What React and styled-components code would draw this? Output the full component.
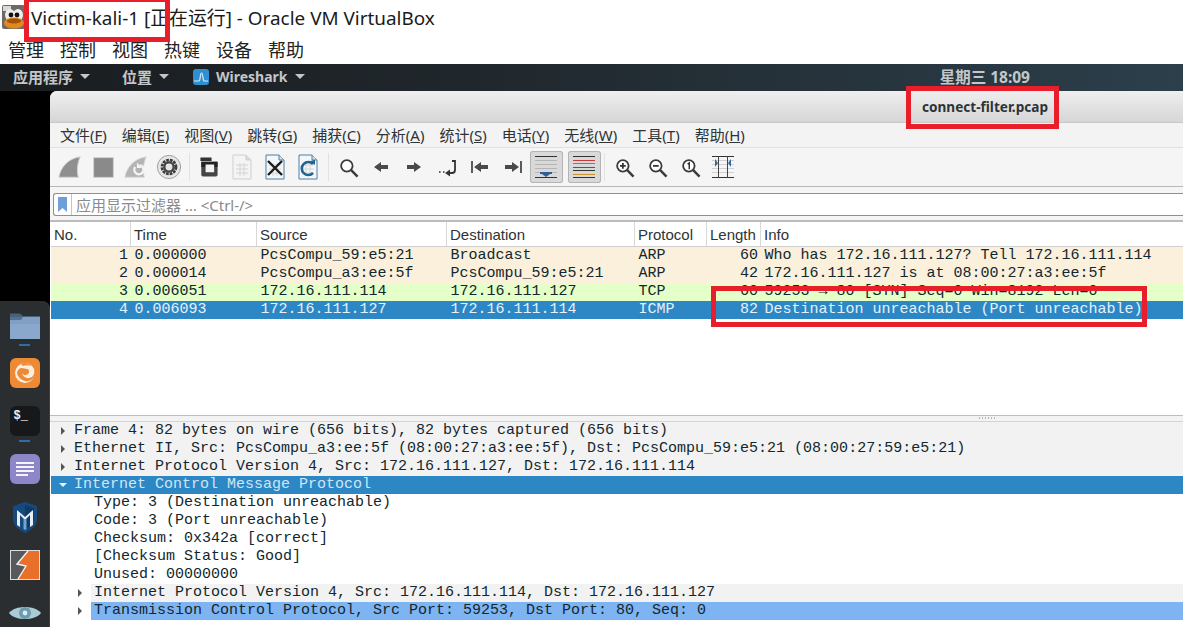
import React from "react";
import styled, { createGlobalStyle } from "styled-components";

const Global = createGlobalStyle`
  html, body { margin: 0; padding: 0; background: #fff; }
  * { box-sizing: border-box; }
`;

const Screen = styled.div`
  position: relative;
  width: 1183px;
  height: 627px;
  overflow: hidden;
  display: flex;
  flex-direction: column;
  font-family: "Noto Sans", "Noto Sans CJK SC", sans-serif;
`;
const TitleBar = styled.div`
  height: 38px;
  flex: none;
  display: flex;
  align-items: center;
  padding: 0 0 5px 2px;
  gap: 6px;
  font-size: 18.9px;
  color: #1a1a1a;
  background: #fff;
`;
const HostMenu = styled.div`
  height: 26px;
  flex: none;
  display: flex;
  align-items: center;
  gap: 16px;
  padding: 0 0 4px 8px;
  font-size: 18px;
  color: #222;
  background: #fff;
`;
const Panel = styled.div`
  height: 27px;
  flex: none;
  display: flex;
  align-items: center;
  padding: 0 153px 2px 13px;
  font-size: 15px;
  font-weight: 700;
  color: #c3c7ca;
  background: linear-gradient(90deg, #1a1d20 0%, #20272c 40%, #2c3f4b 100%);
`;
const PanelItem = styled.div`
  display: flex;
  align-items: center;
  gap: 7px;
  margin-right: ${(p) => p.$gap}px;
  font-size: ${(p) => p.$size || 15}px;
`;
const Caret = styled.span`
  width: 0;
  height: 0;
  border-left: 5px solid transparent;
  border-right: 5px solid transparent;
  border-top: 5px solid #c3c7ca;
`;
const Clock = styled.div`
  margin-left: auto;
  font-size: 15.5px;
`;
const Desk = styled.div`
  flex: 1;
  min-height: 0;
  display: flex;
  background: #000;
`;
const DockColumn = styled.div`
  width: 50px;
  flex: none;
  display: flex;
  flex-direction: column;
  justify-content: flex-end;
`;
const Dock = styled.div`
  height: 326px;
  background: #2b2e30;
  border-top-right-radius: 8px;
  border-right: 1px solid #3c3f41;
  display: flex;
  flex-direction: column;
`;
const DockItem = styled.div`
  position: relative;
  height: 48px;
  flex: none;
  display: flex;
  align-items: center;
  justify-content: center;
`;
const RunDot = styled.span`
  position: absolute;
  left: 19px;
  bottom: 3px;
  width: 11px;
  height: 2px;
  background: #2f6da8;
`;
const Win = styled.div`
  flex: 1;
  min-width: 0;
  display: flex;
  flex-direction: column;
  background: #fff;
  border-top-left-radius: 7px;
  overflow: hidden;
`;
const WinTitle = styled.div`
  height: 32px;
  flex: none;
  display: flex;
  align-items: center;
  justify-content: flex-end;
  padding-right: 135px;
  font-size: 13.6px;
  font-weight: 700;
  color: #2e3436;
  background: linear-gradient(180deg, #efefef, #d6d6d6);
  border-bottom: 1px solid #c8c8c8;
`;
const WinMenu = styled.div`
  height: 25px;
  flex: none;
  display: flex;
  align-items: center;
  gap: 15px;
  padding: 0 0 2px 10px;
  font-size: 15px;
  color: #2e3436;
  background: #f3f3f3;
  border-bottom: 1px solid #e0e0e0;
`;
const Toolbar = styled.div`
  height: 39px;
  flex: none;
  display: flex;
  align-items: center;
  padding-left: 3.5px;
  background: #f5f5f5;
  border-bottom: 1px solid #b8b8b8;
`;
const Tool = styled.div`
  width: 33px;
  height: 32px;
  flex: none;
  display: flex;
  align-items: center;
  justify-content: center;
  margin-left: ${(p) => p.$ml || 0}px;
  border-radius: 3px;
  background: ${(p) => (p.$on ? "#d9d9d9" : "transparent")};
  box-shadow: ${(p) => (p.$on ? "inset 0 0 0 1px #b4b4b4" : "none")};
`;
const ToolSep = styled.div`
  width: 7px;
  height: 28px;
  flex: none;
  display: flex;
  justify-content: center;
  &::after {
    content: "";
    width: 1px;
    background: #e2e2e2;
  }
`;
const FilterBar = styled.div`
  height: 35px;
  flex: none;
  padding: 6px 0 6px 3px;
  background: #f5f5f5;
  border-bottom: 2px solid #bcbcbc;
`;
const FilterInput = styled.div`
  height: 23px;
  display: flex;
  align-items: center;
  background: #fff;
  border: 1px solid #8f8f8f;
  border-right: 0;
  border-top-left-radius: 3px;
  border-bottom-left-radius: 3px;
  font-size: 15px;
  color: #8a8a8a;
`;
const Bookmark = styled.div`
  width: 18px;
  height: 100%;
  margin-right: 4px;
  display: flex;
  align-items: center;
  justify-content: center;
  border-right: 1px solid #c4c4c4;
`;
const ListPane = styled.div`
  height: 194px;
  flex: none;
  padding-left: 1px;
  background: #fff;
  border-bottom: 1px solid #bdbdbd;
`;
const cols = "80px 126px 190px 188px 72px 54px 1fr";
const HeaderRow = styled.div`
  display: grid;
  grid-template-columns: ${cols};
  height: 25px;
  background: #fff;
  border-bottom: 1px solid #cfcfcf;
  font-family: "Liberation Sans", sans-serif;
  font-size: 15px;
  color: #2e3436;
`;
const HeaderCell = styled.div`
  display: flex;
  align-items: center;
  padding-left: 3px;
  border-right: 1px solid #d8d8d8;
  &:last-child {
    border-right: 0;
  }
`;
const rowBg = { arp: "#faf0dc", tcp: "#e4ffc7", sel: "#2d87c5" };
const PacketRow = styled.div`
  display: grid;
  grid-template-columns: ${cols};
  height: 18px;
  line-height: 18px;
  font-family: "Liberation Mono", monospace;
  font-size: 15px;
  white-space: pre;
  color: ${(p) => (p.$kind === "sel" ? "#e3f2fb" : "#12272e")};
  background: ${(p) => rowBg[p.$kind]};
`;
const Cell = styled.div`
  overflow: hidden;
  padding: ${(p) => (p.$right ? "0 3px 0 0" : "0 0 0 3.5px")};
  text-align: ${(p) => (p.$right ? "right" : "left")};
`;
const Sash = styled.div`
  height: 6px;
  flex: none;
  background: #f3f3f3;
  display: flex;
  justify-content: flex-end;
  padding-right: 188px;
  border-bottom: 1px solid #d4d4d4;
`;
const Grip = styled.span`
  width: 16px;
  height: 2px;
  margin-top: 1px;
  background: repeating-linear-gradient(90deg, #b5b5b5 0 1px, transparent 1px 3px);
`;
const Details = styled.div`
  flex: 1;
  min-height: 0;
  padding-left: 1px;
  background: #fff;
`;
const DetailRow = styled.div`
  height: 18px;
  line-height: 18px;
  display: flex;
  align-items: center;
  white-space: pre;
  font-family: "Liberation Mono", monospace;
  font-size: 15px;
  padding-left: ${(p) => p.$indent}px;
  color: ${(p) => (p.$tone === "sel" ? "#cfe6f6" : "#12272e")};
  background: ${(p) => (p.$tone === "sel" ? "#2d87c5" : p.$tone === "top" ? "#f2f2f2" : "transparent")};
`;
const Twisty = styled.span`
  width: ${(p) => p.$w || 23}px;
  flex: none;
  display: flex;
  justify-content: center;
  &::before {
    content: "";
    width: 0;
    height: 0;
    ${(p) =>
      p.$open
        ? "border-left: 4px solid transparent; border-right: 4px solid transparent; border-top: 4px solid #e6f2fa;"
        : "border-top: 4px solid transparent; border-bottom: 4px solid transparent; border-left: 4px solid #555;"}
  }
`;
const SubLabel = styled.span`
  flex: 1;
  height: 18px;
  padding-left: 3px;
  background: ${(p) => (p.$sel ? "#7fb4f2" : "#f2f2f2")};
`;
const Mark = styled.div`
  position: absolute;
  left: ${(p) => p.$x}px;
  top: ${(p) => p.$y}px;
  width: ${(p) => p.$w}px;
  height: ${(p) => p.$h}px;
  border: 5px solid #e81f2b;
  pointer-events: none;
`;

const VBoxIcon = () => (
  <svg width="23" height="24" viewBox="0 0 23 24">
    <rect x="0" y="0" width="23" height="24" rx="2" fill="#6d6a66" />
    <rect x="1" y="1" width="8" height="5" fill="#d9d9d9" />
    <ellipse cx="8" cy="10" rx="5" ry="6" fill="#eee" />
    <ellipse cx="16" cy="10" rx="5" ry="6" fill="#eee" />
    <circle cx="9" cy="10" r="2.4" fill="#111" />
    <circle cx="15" cy="10" r="2.4" fill="#111" />
    <ellipse cx="12" cy="18" rx="10" ry="5.5" fill="#e08a1b" />
    <ellipse cx="12" cy="16" rx="7" ry="2.6" fill="#a5520c" />
  </svg>
);
const SharkBadge = () => (
  <svg width="16" height="16" viewBox="0 0 16 16">
    <rect width="16" height="16" rx="3" fill="#2f8fd0" />
    <path d="M1 12h5c1.5 0 1-8 2.5-8s1.5 8 2.5 8h4" fill="none" stroke="#d9eefb" strokeWidth="1.2" />
  </svg>
);

const FolderIcon = () => (
  <svg width="30" height="27" viewBox="0 0 30 27">
    <path d="M0 1.5h10l3 2.5h17v5H0z" fill="#47607c" />
    <path d="M0 5h30v22H0z" fill="#7f9fc4" />
    <path d="M0 5h13l-2 3H0z" fill="#56708f" />
    <path d="M0 12h30v15H0z" fill="#8aa8cc" />
  </svg>
);
const FoxIcon = () => (
  <svg width="30" height="30" viewBox="0 0 30 30">
    <rect width="30" height="30" rx="6" fill="#ee8a34" />
    <circle cx="15" cy="15" r="10" fill="#fbeee1" />
    <path d="M9 11c3-2 5 0 8 0 2 0 3 3 1 5s-5 1-6-1c1 5 7 7 11 3 2-3 2-7 0-10l3 2c1 5-1 11-7 13-6 1-11-3-12-8 0-1 1-3 2-4z" fill="#ee8a34" />
    <path d="M11 6c3-2 8-1 10 2-3-1-6-1-8 0z" fill="#ee8a34" />
  </svg>
);
const TermIcon = () => (
  <svg width="30" height="30" viewBox="0 0 30 30">
    <rect width="30" height="30" rx="6" fill="#17181a" />
    <text x="3.5" y="13" fontFamily="Liberation Mono, monospace" fontSize="12" fontWeight="700" fill="#f2f2f2">$_</text>
  </svg>
);
const NotesIcon = () => (
  <svg width="30" height="30" viewBox="0 0 30 30">
    <rect width="30" height="30" rx="6" fill="#8d86c9" />
    <path d="M6 9h18M6 13h18M6 17h18M6 21h12" stroke="#f5f4fb" strokeWidth="2" fill="none" />
  </svg>
);
const MsfIcon = () => (
  <svg width="24" height="31" viewBox="0 0 24 31">
    <path d="M12 0l12 4v13c0 7-6 11-12 14C6 28 0 24 0 17V4z" fill="#164a7e" />
    <path d="M12 3l9 3v10c0 5-5 9-9 11z" fill="#0f3a66" />
    <path d="M4 8l8 7 8-7v15l-3 2V13l-5 5-5-5v12l-3-2z" fill="#e9eef3" />
    <path d="M10.5 17h3v10l-1.5 1-1.5-1z" fill="#6fa6d6" />
  </svg>
);
const BurpIcon = () => (
  <svg width="30" height="30" viewBox="0 0 30 30">
    <rect x="0.5" y="0.5" width="29" height="29" fill="#e8702a" stroke="#ddd" />
    <path d="M1 1h17L7 14l9 2L8 29H1z" fill="#58595b" />
    <path d="M18 1L7 14l9 2L8 29" fill="none" stroke="#f3f3f3" strokeWidth="1.4" />
  </svg>
);
const EyeIcon = () => (
  <svg width="32" height="18" viewBox="0 0 32 18">
    <path d="M0 9C6 1 26 1 32 9 26 17 6 17 0 9z" fill="#a9cbd6" />
    <circle cx="16" cy="9" r="6" fill="#6d9aad" />
    <circle cx="16" cy="9" r="2.4" fill="#dcecf1" />
  </svg>
);

const Ico = ({ children, size = 28 }) => (
  <svg width={size} height={size} viewBox="0 0 28 28">
    {children}
  </svg>
);
const Fin = () => (
  <Ico size={26}>
    <path d="M2 25C4 14 12 5 25 3c-3 7-4 15-2 22z" fill="#8f8f8f" stroke="#d0d0d0" />
  </Ico>
);
const StopIco = () => (
  <Ico size={25}>
    <rect x="3" y="3" width="22" height="22" fill="#8a8a8a" stroke="#cfcfcf" />
  </Ico>
);
const FinRestart = () => (
  <Ico size={26}>
    <path d="M2 25C4 14 12 5 25 3c-3 7-4 15-2 22z" fill="#b4b4b4" stroke="#d8d8d8" />
    <path d="M13 14a5 5 0 1 0 5-2" fill="none" stroke="#f5f5f5" strokeWidth="2.4" />
    <path d="M15 9v6h5z" fill="#f5f5f5" />
  </Ico>
);
const GearIco = () => (
  <Ico size={26}>
    <circle cx="14" cy="14" r="12.5" fill="#e6e6e6" stroke="#9a9a9a" />
    <circle cx="14" cy="14" r="7.5" fill="none" stroke="#3c3c3c" strokeWidth="3" strokeDasharray="3 1" />
    <circle cx="14" cy="14" r="5" fill="none" stroke="#444" strokeWidth="2.5" />
  </Ico>
);
const OpenIco = () => (
  <Ico size={24}>
    <path d="M4 3h13v4H4z" fill="#333" />
    <path d="M5 8h19v15a2 2 0 0 1-2 2H7a2 2 0 0 1-2-2z" fill="#444" />
    <path d="M5 8h19v6H5z" fill="#222" />
    <path d="M10 11h10v9H10z" fill="#f2f2f2" />
  </Ico>
);
const Doc = ({ fill = "#fff", stroke = "#bdbdbd" }) => (
  <>
    <path d="M5 2h13l5 5v19H5z" fill={fill} stroke={stroke} />
    <path d="M18 2v5h5" fill="#dcdcdc" stroke={stroke} />
    <path d="M8 12h12M8 16h12M8 20h12M12 10v13M16 10v13" stroke="#d4d4d4" strokeWidth="1" />
  </>
);
const FileIco = () => (
  <Ico>
    <Doc fill="#f4f4f4" stroke="#cfcfcf" />
  </Ico>
);
const CloseFileIco = () => (
  <Ico>
    <Doc fill="#f4f7fa" stroke="#4a80a8" />
    <path d="M7 8l14 14M21 8L7 22" stroke="#1c1c1c" strokeWidth="2.4" />
  </Ico>
);
const ReloadIco = () => (
  <Ico>
    <Doc fill="#f4f7fa" stroke="#4a80a8" />
    <path d="M19 20a6.5 6.5 0 1 1 0-9" fill="none" stroke="#23638f" strokeWidth="2.6" />
    <path d="M16 8l5-1v5z" fill="#23638f" />
  </Ico>
);
const Lens = ({ label }) => (
  <Ico size={23}>
    <circle cx="12" cy="12" r="7" fill="#fff" stroke="#3b3b3b" strokeWidth="2.2" />
    <path d="M17 17l8 8" stroke="#3b3b3b" strokeWidth="3" />
    {label === "+" && <path d="M8.5 12h7M12 8.5v7" stroke="#333" strokeWidth="2.2" />}
    {label === "-" && <path d="M8.5 12h7" stroke="#333" strokeWidth="2.2" />}
    {label === "1" && <path d="M10.5 10l2-1.5V16" stroke="#333" strokeWidth="1.8" fill="none" />}
  </Ico>
);
const BackIco = () => (
  <Ico>
    <path d="M7 14l7-5v3h7v4h-7v3z" fill="#4a4a4a" />
  </Ico>
);
const ForwardIco = () => (
  <Ico>
    <path d="M21 14l-7-5v3H7v4h7v3z" fill="#4a4a4a" />
  </Ico>
);
const JumpIco = () => (
  <Ico>
    <path d="M6 19h1.6M10 19h1.5" stroke="#333" strokeWidth="1.6" />
    <path d="M19 8h3v9a3 3 0 0 1-3 3h-2" fill="none" stroke="#333" strokeWidth="1.8" />
    <path d="M12 20l5-3.5v7z" fill="#333" />
  </Ico>
);
const FirstIco = () => (
  <Ico>
    <path d="M6 8v12" stroke="#4a4a4a" strokeWidth="1.8" />
    <path d="M8 14l7-5v3h7v4h-7v3z" fill="#4a4a4a" />
  </Ico>
);
const LastIco = () => (
  <Ico>
    <path d="M22 8v12" stroke="#4a4a4a" strokeWidth="1.8" />
    <path d="M20 14l-7-5v3H6v4h7v3z" fill="#4a4a4a" />
  </Ico>
);
const ScrollIco = () => (
  <Ico>
    <path d="M3 3.5h22" stroke="#333" />
    <path d="M3 7.5h22M3 11.5h22M3 15.5h22M3 19.5h22" stroke="#b5b5b5" />
    <path d="M3 24.5h22" stroke="#333" />
    <path d="M8 19h12v2H8z" fill="#2f5f95" />
    <path d="M10 21h8l-4 3z" fill="#2f5f95" />
  </Ico>
);
const ColorIco = () => (
  <Ico>
    <path d="M3 3.5h22" stroke="#333" />
    <path d="M3 7.5h22" stroke="#cc3b3b" />
    <path d="M3 10.5h22" stroke="#4ea043" />
    <path d="M3 14.5h22" stroke="#3557a8" />
    <path d="M3 17.5h22" stroke="#333" />
    <path d="M3 21.5h22" stroke="#c9952a" />
    <path d="M3 24.5h22" stroke="#333" />
  </Ico>
);
const ResizeIco = () => (
  <Ico>
    <path d="M3 3.5h22M3 24.5h22" stroke="#333" />
    <path d="M3 7.5h22M3 11.5h22M3 15.5h22M3 19.5h22" stroke="#d0d0d0" />
    <path d="M9.5 3v22M18.5 3v22" stroke="#444" />
    <path d="M6 6l3 4-3 4zM22 6l-3 4 3 4z" fill="#2f6da8" />
  </Ico>
);

const hostMenu = ["管理", "控制", "视图", "热键", "设备", "帮助"];
const winMenu = [
  ["文件", "F"], ["编辑", "E"], ["视图", "V"], ["跳转", "G"], ["捕获", "C"], ["分析", "A"],
  ["统计", "S"], ["电话", "Y"], ["无线", "W"], ["工具", "T"], ["帮助", "H"],
];
const headers = ["No.", "Time", "Source", "Destination", "Protocol", "Length", "Info"];
const packets = [
  ["arp", "1", "0.000000", "PcsCompu_59:e5:21", "Broadcast", "ARP", "60", "Who has 172.16.111.127? Tell 172.16.111.114"],
  ["arp", "2", "0.000014", "PcsCompu_a3:ee:5f", "PcsCompu_59:e5:21", "ARP", "42", "172.16.111.127 is at 08:00:27:a3:ee:5f"],
  ["tcp", "3", "0.006051", "172.16.111.114", "172.16.111.127", "TCP", "60", "59253 → 80 [SYN] Seq=0 Win=8192 Len=0"],
  ["sel", "4", "0.006093", "172.16.111.127", "172.16.111.114", "ICMP", "82", "Destination unreachable (Port unreachable)"],
];
const children = [
  "Type: 3 (Destination unreachable)",
  "Code: 3 (Port unreachable)",
  "Checksum: 0x342a [correct]",
  "[Checksum Status: Good]",
  "Unused: 00000000",
];

export default function App() {
  return (
    <Screen>
      <Global />
      <TitleBar>
        <VBoxIcon />
        <span>Victim-kali-1 [正在运行] - Oracle VM VirtualBox</span>
      </TitleBar>
      <HostMenu>
        {hostMenu.map((m) => (
          <span key={m}>{m}</span>
        ))}
      </HostMenu>
      <Panel>
        <PanelItem $gap={32}>
          应用程序 <Caret />
        </PanelItem>
        <PanelItem $gap={24}>
          位置 <Caret />
        </PanelItem>
        <PanelItem $gap={0} $size={14}>
          <SharkBadge />
          Wireshark <Caret />
        </PanelItem>
        <Clock>星期三 18:09</Clock>
      </Panel>
      <Desk>
        <DockColumn>
          <Dock>
            <DockItem><FolderIcon /><RunDot /></DockItem>
            <DockItem><FoxIcon /></DockItem>
            <DockItem><TermIcon /><RunDot /></DockItem>
            <DockItem><NotesIcon /></DockItem>
            <DockItem><MsfIcon /></DockItem>
            <DockItem><BurpIcon /></DockItem>
            <DockItem><EyeIcon /></DockItem>
          </Dock>
        </DockColumn>
        <Win>
          <WinTitle>connect-filter.pcap</WinTitle>
          <WinMenu>
            {winMenu.map(([zh, key]) => (
              <span key={key}>
                {zh}(<u>{key}</u>)
              </span>
            ))}
          </WinMenu>
          <Toolbar>
            <Tool><Fin /></Tool>
            <Tool><StopIco /></Tool>
            <Tool><FinRestart /></Tool>
            <Tool><GearIco /></Tool>
            <ToolSep />
            <Tool><OpenIco /></Tool>
            <Tool><FileIco /></Tool>
            <Tool><CloseFileIco /></Tool>
            <Tool><ReloadIco /></Tool>
            <ToolSep />
            <Tool><Lens /></Tool>
            <Tool><BackIco /></Tool>
            <Tool><ForwardIco /></Tool>
            <Tool><JumpIco /></Tool>
            <Tool><FirstIco /></Tool>
            <Tool><LastIco /></Tool>
            <Tool $on><ScrollIco /></Tool>
            <Tool $on $ml={5}><ColorIco /></Tool>
            <ToolSep />
            <Tool><Lens label="+" /></Tool>
            <Tool><Lens label="-" /></Tool>
            <Tool><Lens label="1" /></Tool>
            <Tool><ResizeIco /></Tool>
          </Toolbar>
          <FilterBar>
            <FilterInput>
              <Bookmark>
                <svg width="9" height="15" viewBox="0 0 9 15">
                  <path d="M0 0h9v15L4.5 11 0 15z" fill="#6f9fd8" />
                </svg>
              </Bookmark>
              应用显示过滤器 … &lt;Ctrl-/&gt;
            </FilterInput>
          </FilterBar>
          <ListPane>
            <HeaderRow>
              {headers.map((h) => (
                <HeaderCell key={h}>{h}</HeaderCell>
              ))}
            </HeaderRow>
            {packets.map(([kind, no, time, src, dst, proto, len, info]) => (
              <PacketRow key={no} $kind={kind}>
                <Cell $right>{no}</Cell>
                <Cell>{time}</Cell>
                <Cell>{src}</Cell>
                <Cell>{dst}</Cell>
                <Cell>{proto}</Cell>
                <Cell $right>{len}</Cell>
                <Cell>{info}</Cell>
              </PacketRow>
            ))}
          </ListPane>
          <Sash><Grip /></Sash>
          <Details>
            <DetailRow $indent={0} $tone="top"><Twisty />Frame 4: 82 bytes on wire (656 bits), 82 bytes captured (656 bits)</DetailRow>
            <DetailRow $indent={0} $tone="top"><Twisty />Ethernet II, Src: PcsCompu_a3:ee:5f (08:00:27:a3:ee:5f), Dst: PcsCompu_59:e5:21 (08:00:27:59:e5:21)</DetailRow>
            <DetailRow $indent={0} $tone="top"><Twisty />Internet Protocol Version 4, Src: 172.16.111.127, Dst: 172.16.111.114</DetailRow>
            <DetailRow $indent={0} $tone="sel"><Twisty $open />Internet Control Message Protocol</DetailRow>
            {children.map((c) => (
              <DetailRow key={c} $indent={43}>{c}</DetailRow>
            ))}
            <DetailRow $indent={18}>
              <Twisty $w={22} />
              <SubLabel>Internet Protocol Version 4, Src: 172.16.111.114, Dst: 172.16.111.127</SubLabel>
            </DetailRow>
            <DetailRow $indent={18}>
              <Twisty $w={22} />
              <SubLabel $sel>Transmission Control Protocol, Src Port: 59253, Dst Port: 80, Seq: 0</SubLabel>
            </DetailRow>
          </Details>
        </Win>
      </Desk>
      <Mark $x={24} $y={-3} $w={146} $h={45} />
      <Mark $x={906} $y={86} $w={153} $h={43} />
      <Mark $x={711} $y={286} $w={436} $h={41} />
    </Screen>
  );
}
